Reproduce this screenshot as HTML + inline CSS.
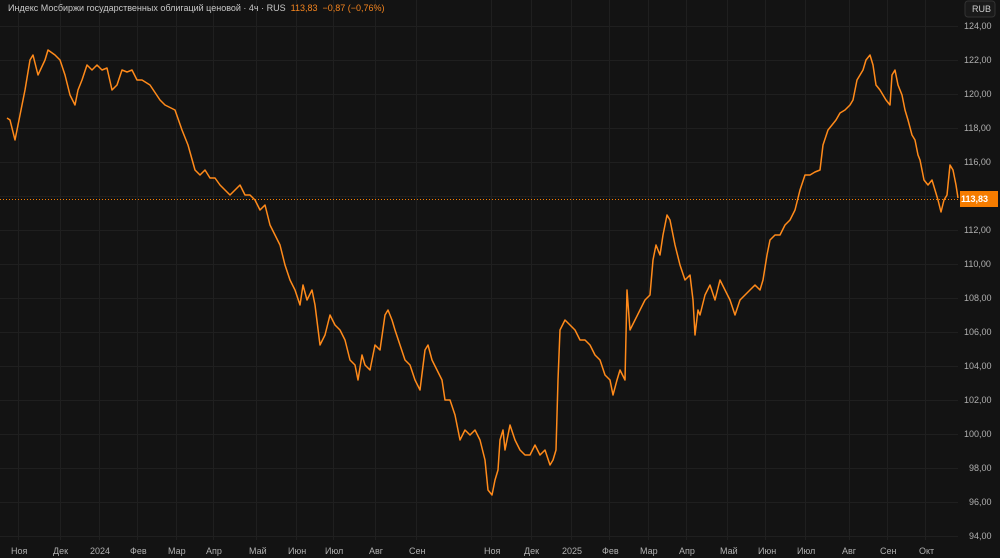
<!DOCTYPE html><html><head><meta charset="utf-8"><style>
body{margin:0;width:1000px;height:558px;background:#131313;overflow:hidden;font-family:"Liberation Sans",sans-serif;position:relative}
.t{position:absolute;color:#b0b0b0;font-size:9px}
</style></head><body>
<svg width="1000" height="558" style="position:absolute;left:0;top:0">
<rect x="0" y="0" width="1000" height="558" fill="#131313"/>
<g stroke="#1f1f1f" stroke-width="1">
<line x1="0" y1="26.5" x2="958" y2="26.5"/><line x1="0" y1="60.5" x2="958" y2="60.5"/><line x1="0" y1="94.5" x2="958" y2="94.5"/><line x1="0" y1="128.5" x2="958" y2="128.5"/><line x1="0" y1="162.5" x2="958" y2="162.5"/><line x1="0" y1="196.5" x2="958" y2="196.5"/><line x1="0" y1="230.5" x2="958" y2="230.5"/><line x1="0" y1="264.5" x2="958" y2="264.5"/><line x1="0" y1="298.5" x2="958" y2="298.5"/><line x1="0" y1="332.5" x2="958" y2="332.5"/><line x1="0" y1="366.5" x2="958" y2="366.5"/><line x1="0" y1="400.5" x2="958" y2="400.5"/><line x1="0" y1="434.5" x2="958" y2="434.5"/><line x1="0" y1="468.5" x2="958" y2="468.5"/><line x1="0" y1="502.5" x2="958" y2="502.5"/><line x1="0" y1="536.5" x2="958" y2="536.5"/>
<line x1="18.5" y1="0" x2="18.5" y2="540"/><line x1="60.5" y1="0" x2="60.5" y2="540"/><line x1="99.5" y1="0" x2="99.5" y2="540"/><line x1="137.5" y1="0" x2="137.5" y2="540"/><line x1="176.5" y1="0" x2="176.5" y2="540"/><line x1="213.5" y1="0" x2="213.5" y2="540"/><line x1="256.5" y1="0" x2="256.5" y2="540"/><line x1="296.5" y1="0" x2="296.5" y2="540"/><line x1="333.5" y1="0" x2="333.5" y2="540"/><line x1="375.5" y1="0" x2="375.5" y2="540"/><line x1="416.5" y1="0" x2="416.5" y2="540"/><line x1="491.5" y1="0" x2="491.5" y2="540"/><line x1="531.5" y1="0" x2="531.5" y2="540"/><line x1="571.5" y1="0" x2="571.5" y2="540"/><line x1="609.5" y1="0" x2="609.5" y2="540"/><line x1="648.5" y1="0" x2="648.5" y2="540"/><line x1="686.5" y1="0" x2="686.5" y2="540"/><line x1="727.5" y1="0" x2="727.5" y2="540"/><line x1="765.5" y1="0" x2="765.5" y2="540"/><line x1="805.5" y1="0" x2="805.5" y2="540"/><line x1="849.5" y1="0" x2="849.5" y2="540"/><line x1="887.5" y1="0" x2="887.5" y2="540"/><line x1="925.5" y1="0" x2="925.5" y2="540"/>
</g>
<line x1="0" y1="199.5" x2="958" y2="199.5" stroke="#f57c00" stroke-width="1" stroke-dasharray="1,2"/>
<polyline fill="none" stroke="#ff8a1a" stroke-width="1.5" stroke-linejoin="round" points="7,118 10,120 15,140 20,115 25,90 30,60 33,55 38,75 45,60 48,50 55,55 60,60 65,75 70,95 75,105 78,90 82,80 87,65 92,70 97,65 102,70 107,68 112,90 117,85 122,70 127,72 132,70 137,80 142,80 150,85 160,100 165,105 175,110 182,130 188,145 195,170 200,175 205,170 210,178 215,178 220,185 225,190 230,195 235,190 240,185 245,195 250,195 255,200 260,210 265,205 270,225 275,235 280,245 285,265 290,280 295,290 300,305 303,285 307,300 312,290 315,305 320,345 325,335 330,315 335,325 340,330 345,340 350,360 355,365 358,380 362,355 365,365 370,370 375,345 380,350 385,315 388,310 392,320 395,330 400,345 405,360 410,365 415,380 420,390 425,350 428,345 432,360 437,370 442,380 445,400 450,400 455,415 460,440 465,430 470,435 475,430 480,440 485,460 488,490 492,495 495,480 498,470 500,440 503,430 505,450 510,425 515,440 520,450 525,455 530,455 535,445 540,455 545,450 550,465 553,460 556,450 558,380 560,330 565,320 570,325 575,330 580,340 585,340 590,345 595,355 600,360 605,375 610,380 613,395 617,380 620,370 625,380 627,290 630,330 635,320 640,310 645,300 650,295 653,260 656,245 660,255 663,235 667,215 670,220 675,245 680,265 685,280 690,275 693,300 695,335 698,310 700,315 705,295 710,285 715,300 720,280 725,290 730,300 735,315 740,300 745,295 750,290 755,285 760,290 763,280 767,255 770,240 775,235 780,235 785,225 790,220 795,210 800,190 805,175 810,175 815,172 820,170 823,145 828,130 832,125 836,120 840,113 845,110 850,105 853,100 857,80 860,75 863,70 866,60 870,55 873,65 876,85 880,90 883,95 886,100 890,105 892,75 895,70 898,85 902,95 905,110 908,120 912,135 915,140 918,155 920,160 924,180 928,185 932,180 935,190 938,200 941,212 944,200 947,195 950,165 953,170 956,185 958,198"/>
<rect x="965" y="1" width="30" height="16" rx="3" fill="#1a1a1a" stroke="#333"/>
<rect x="960" y="191" width="38" height="16" fill="#f57c00"/>
</svg>
<div class="t" style="left:8px;top:3px;color:#c8c8c8">Индекс Мосбиржи государственных облигаций ценовой · 4ч · RUS <span style="color:#f5851f">&nbsp;113,83 &nbsp;−0,87 (−0,76%)</span></div>
<div class="t" style="left:972px;top:4px;color:#ccc">RUB</div>
<div class="t" style="left:961px;top:194px;color:#fff;font-weight:bold">113,83</div>
<div class="t" style="left:964px;top:21px">124,00</div><div class="t" style="left:964px;top:55px">122,00</div><div class="t" style="left:964px;top:89px">120,00</div><div class="t" style="left:964px;top:123px">118,00</div><div class="t" style="left:964px;top:157px">116,00</div><div class="t" style="left:964px;top:225px">112,00</div><div class="t" style="left:964px;top:259px">110,00</div><div class="t" style="left:964px;top:293px">108,00</div><div class="t" style="left:964px;top:327px">106,00</div><div class="t" style="left:964px;top:361px">104,00</div><div class="t" style="left:964px;top:395px">102,00</div><div class="t" style="left:964px;top:429px">100,00</div><div class="t" style="left:969px;top:463px">98,00</div><div class="t" style="left:969px;top:497px">96,00</div><div class="t" style="left:969px;top:531px">94,00</div>
<div class="t" style="left:11px;top:546px">Ноя</div><div class="t" style="left:53px;top:546px">Дек</div><div class="t" style="left:90px;top:546px">2024</div><div class="t" style="left:130px;top:546px">Фев</div><div class="t" style="left:168px;top:546px">Мар</div><div class="t" style="left:206px;top:546px">Апр</div><div class="t" style="left:249px;top:546px">Май</div><div class="t" style="left:288px;top:546px">Июн</div><div class="t" style="left:325px;top:546px">Июл</div><div class="t" style="left:369px;top:546px">Авг</div><div class="t" style="left:409px;top:546px">Сен</div><div class="t" style="left:484px;top:546px">Ноя</div><div class="t" style="left:524px;top:546px">Дек</div><div class="t" style="left:562px;top:546px">2025</div><div class="t" style="left:602px;top:546px">Фев</div><div class="t" style="left:640px;top:546px">Мар</div><div class="t" style="left:679px;top:546px">Апр</div><div class="t" style="left:720px;top:546px">Май</div><div class="t" style="left:758px;top:546px">Июн</div><div class="t" style="left:797px;top:546px">Июл</div><div class="t" style="left:842px;top:546px">Авг</div><div class="t" style="left:880px;top:546px">Сен</div><div class="t" style="left:919px;top:546px">Окт</div>
</body></html>
